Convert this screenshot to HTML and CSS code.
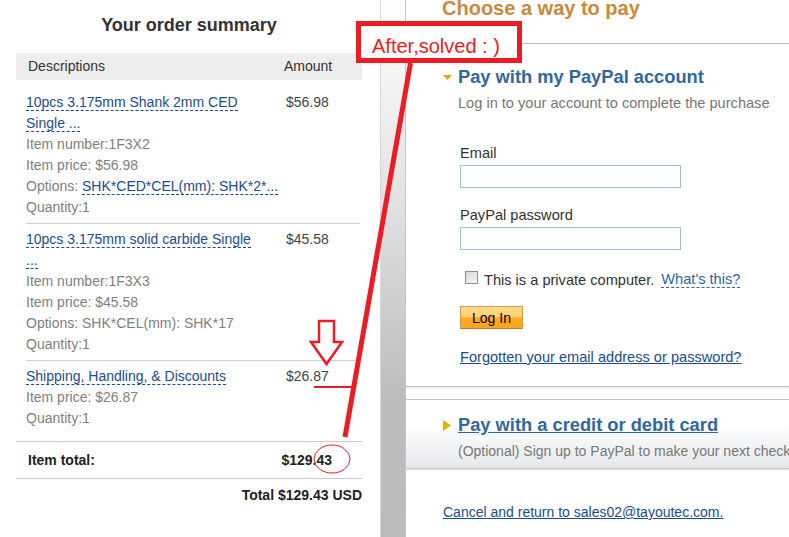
FILE: index.html
```html
<!DOCTYPE html>
<html lang="en">
<head>
<meta charset="utf-8">
<title>Choose a way to pay</title>
<link rel="stylesheet" href="styles.css">
</head>
<body>
<div class="page">
  <section class="summary">
    <h2 class="summary-title">Your order summary</h2>
    <div class="sum-head"><span class="col-desc">Descriptions</span><span class="col-amt">Amount</span></div>
    <ul class="items">
      <li class="item">
        <div class="desc">
          <div class="name"><a class="dlink">10pcs 3.175mm Shank 2mm CED Single ...</a></div>
          <div class="meta">Item number:1F3X2</div>
          <div class="meta">Item price: $56.98</div>
          <div class="meta nowrap">Options: <a class="dlink">SHK*CED*CEL(mm): SHK*2*...</a></div>
          <div class="meta">Quantity:1</div>
        </div>
        <div class="amt">$56.98</div>
      </li>
      <li class="item">
        <div class="desc">
          <div class="name"><a class="dlink">10pcs 3.175mm solid carbide Single ...</a></div>
          <div class="meta">Item number:1F3X3</div>
          <div class="meta">Item price: $45.58</div>
          <div class="meta nowrap">Options: SHK*CEL(mm): SHK*17</div>
          <div class="meta">Quantity:1</div>
        </div>
        <div class="amt">$45.58</div>
      </li>
      <li class="item">
        <div class="desc">
          <div class="name wide"><a class="dlink">Shipping, Handling, &amp; Discounts</a></div>
          <div class="meta">Item price: $26.87</div>
          <div class="meta">Quantity:1</div>
        </div>
        <div class="amt">$26.87</div>
      </li>
    </ul>
    <div class="item-total"><span>Item total:</span><span>$129.43</span></div>
    <div class="grand-total">Total $129.43 USD</div>
  </section>

  <div class="divider"></div>

  <section class="pay">
    <div class="pay-head"><h1 class="choose">Choose a way to pay</h1></div>

    <div class="panel panel-login">
      <h3 class="opt-title">
        <svg class="tri" width="9" height="5" viewBox="0 0 9 5"><path d="M0 0H9L4.5 5Z" fill="#d9ab0b"/></svg>
        <span>Pay with my PayPal account</span>
      </h3>
      <p class="opt-sub">Log in to your account to complete the purchase</p>
      <form class="login">
        <label class="field-label" for="email">Email</label>
        <input id="email" class="field" type="text">
        <label class="field-label pw" for="pw">PayPal password</label>
        <input id="pw" class="field" type="password">
        <div class="remember">
          <input type="checkbox" class="check">
          <span>This is a private computer.</span>
          <a class="whats">What's this?</a>
        </div>
        <button class="btn-login" type="button">Log In</button>
        <p class="forgot-row"><a class="forgot">Forgotten your email address or password?</a></p>
      </form>
    </div>

    <div class="panel panel-card">
      <h3 class="opt-title">
        <svg class="tri tri-r" width="8" height="11" viewBox="0 0 8 11"><path d="M0 0L8 5.5L0 11Z" fill="#e2b203"/></svg>
        <a class="card-link">Pay with a credit or debit card</a>
      </h3>
      <p class="opt-sub card-sub">(Optional) Sign up to PayPal to make your next checkout even faster.</p>
    </div>

    <p class="cancel-row"><a class="cancel">Cancel and return to sales02@tayoutec.com.</a></p>
  </section>

  <div class="note">After,solved : )</div>
  <svg class="marks" width="789" height="537" viewBox="0 0 789 537">
    <line x1="410.5" y1="63" x2="345" y2="437" stroke="#ed1c24" stroke-width="5"/>
    <polygon points="319,321 334,321 334,342 342,342 326.5,364 311,342 319,342" fill="none" stroke="#ed1c24" stroke-width="2.5" stroke-linejoin="miter"/>
    <line x1="314" y1="387" x2="353" y2="387" stroke="#ed1c24" stroke-width="2"/>
    <ellipse cx="332" cy="459" rx="18" ry="14" fill="none" stroke="#ed1c24" stroke-width="1"/>
  </svg>
</div>
</body>
</html>
```

FILE: styles.css
```css
* { box-sizing: border-box; }
html, body { margin: 0; padding: 0; }
body {
  font-family: "Liberation Sans", Arial, sans-serif;
  font-size: 14px;
  color: #333;
  background: #fff;
}
a { cursor: pointer; }

.page {
  position: relative;
  display: flex;
  width: 100%;
  height: 537px;
  overflow: hidden;
}

/* ---------- order summary ---------- */
.summary {
  width: 380px;
  flex: none;
  padding: 0 18px 0 16px;
}
.summary-title {
  margin: 14px 0 0;
  font-size: 18px;
  line-height: 22px;
  font-weight: bold;
  text-align: center;
  color: #333;
}
.sum-head {
  display: flex;
  margin-top: 17px;
  height: 27px;
  line-height: 27px;
  padding-left: 12px;
  background: #eee;
  color: #333;
}
.col-desc { width: 256px; }

.items {
  list-style: none;
  margin: 7px 2px 7px 10px;
  padding: 0;
}
.item {
  display: flex;
  padding: 5px 0;
  line-height: 21px;
  border-bottom: 1px solid #d0d0d0;
}
.item:last-child { border-bottom: 0; }
.desc { width: 260px; flex: none; }
.name { width: 232px; }
.name.wide { width: 260px; }
.meta { color: #808080; }
.nowrap { white-space: nowrap; }
.dlink {
  color: #1b4c8f;
  text-decoration: none;
  border-bottom: 1px dashed #1b4c8f;
}
.amt { color: #444; }

.item-total {
  display: flex;
  justify-content: space-between;
  height: 38px;
  line-height: 36px;
  padding: 0 30px 0 12px;
  border-top: 1px solid #ccc;
  border-bottom: 1px solid #ccc;
  font-weight: bold;
  color: #222;
}
.grand-total {
  margin-top: 7px;
  line-height: 18px;
  text-align: right;
  font-weight: bold;
  color: #222;
}

/* ---------- divider strip ---------- */
.divider {
  width: 26px;
  flex: none;
  border-left: 1px solid #d8d8d8;
  border-right: 1px solid #c6c6c6;
  background: linear-gradient(#fff 0, #e2e2e2 200px, #bcbcbc 400px, #bbb 100%);
}

/* ---------- pay side ---------- */
.pay {
  flex: 1;
  min-width: 0;
  overflow: hidden;
  font-size: 14.6px;
}
.pay-head {
  height: 44px;
  padding-left: 36px;
  border-bottom: 1px solid #c2c2c2;
}
.choose {
  margin: 0;
  font-size: 20px;
  line-height: 16px;
  font-weight: bold;
  color: #c98a3c;
}

.panel { padding-left: 37px; }
.panel-login {
  padding-top: 22px;
  padding-bottom: 20px;
  border-bottom: 1px solid #c4c4c4;
  box-shadow: 0 1px 2px rgba(0, 0, 0, 0.12);
}
.opt-title {
  display: flex;
  align-items: center;
  margin: 0;
  font-size: 18.3px;
  line-height: 22px;
  font-weight: bold;
  color: #2f689f;
}
.tri { flex: none; margin-right: 6px; }
.tri-r { margin-right: 7px; }
.opt-sub {
  margin: 6px 0 0 15px;
  line-height: 18px;
  color: #777;
}

.login { margin-left: 17px; }
.field-label {
  display: block;
  margin-top: 32px;
  line-height: 18px;
  color: #333;
}
.field-label.pw { margin-top: 18px; }
.field {
  display: block;
  margin: 3px 0 0;
  width: 221px;
  height: 23px;
  border: 1px solid #a6bdd6;
  background: #fff;
  padding: 0 3px;
  font: inherit;
}
.remember {
  display: flex;
  align-items: flex-start;
  margin-top: 21px;
  line-height: 18px;
  color: #333;
}
.check {
  appearance: none;
  -webkit-appearance: none;
  flex: none;
  width: 13px;
  height: 13px;
  margin: 0 6px 0 5px;
  border: 1px solid #8e8f8f;
  background: linear-gradient(135deg, #d8d8d8, #f6f6f6);
}
.whats {
  margin-left: 7px;
  color: #2f65a8;
  border-bottom: 1px dashed #2f65a8;
  line-height: 16px;
}
.btn-login {
  display: block;
  margin-top: 17px;
  width: 63px;
  height: 23px;
  padding: 0;
  border: 1px solid #cf9b45;
  border-bottom-color: #b7802a;
  background: linear-gradient(#ffda8e 0%, #ffcf72 48%, #ffa823 52%, #ffa41c 100%);
  font-family: "Liberation Sans", Arial, sans-serif;
  font-size: 14px;
  color: #000;
}
.forgot-row {
  margin: 19px 0 0;
  line-height: 18px;
}
.forgot, .cancel {
  color: #1a4d8c;
  text-decoration: underline;
}

.panel-card {
  margin-top: 12px;
  padding-top: 14px;
  padding-bottom: 8px;
  border-top: 1px solid #c4c4c4;
  border-bottom: 1px solid #c8c8c8;
  background: linear-gradient(#fff 0%, #fff 35%, #e5e8eb 100%);
  box-shadow: 0 1px 2px rgba(0, 0, 0, 0.14);
}
.card-link {
  color: #2f689f;
  text-decoration: underline;
}
.card-sub {
  white-space: nowrap;
  font-size: 14px;
}
.cancel-row {
  margin: 34px 0 0 37px;
  line-height: 18px;
  font-size: 14px;
}

/* ---------- red annotations on top ---------- */
.note {
  position: absolute;
  left: 356px;
  top: 21px;
  width: 166px;
  height: 42px;
  padding: 8px 0 0 11px;
  border: 5px solid #ed1c24;
  background: #fff;
  font-family: "Liberation Sans", Arial, sans-serif;
  font-size: 20px;
  line-height: 24px;
  color: #ed1c24;
  white-space: nowrap;
}
.marks {
  position: absolute;
  left: 0;
  top: 0;
  pointer-events: none;
}
```
